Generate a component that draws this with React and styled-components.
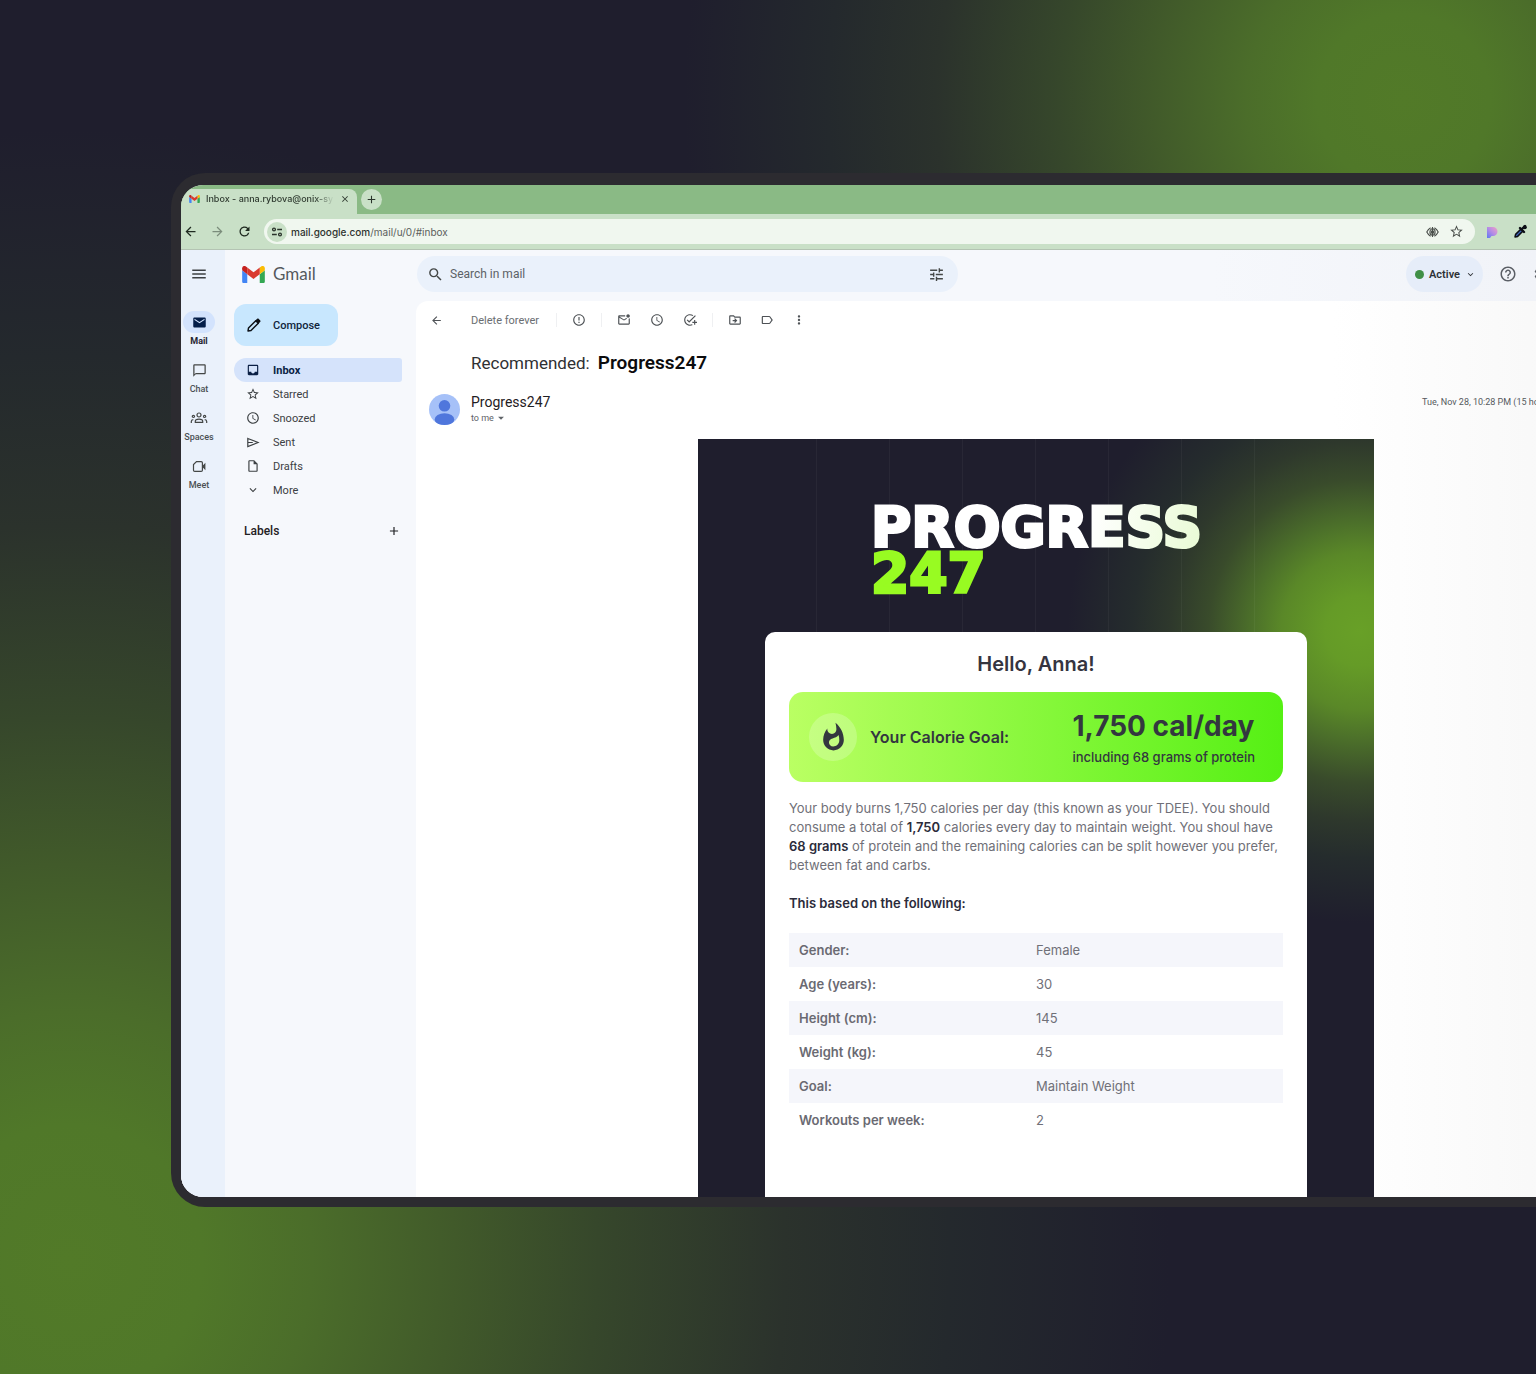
import React from "react";
import styled, { createGlobalStyle, css } from "styled-components";
import {
  MdMenu, MdSearch, MdTune, MdChatBubbleOutline, MdInbox, MdStarBorder, MdAccessTime,
  MdOutlineInsertDriveFile, MdExpandMore, MdAdd, MdArrowBack, MdArrowForward, MdErrorOutline,
  MdOutlineMarkEmailUnread, MdOutlineAddTask, MdMoreVert, MdHelpOutline, MdMail, MdRefresh, MdClose,
  MdArrowDropDown, MdOutlineSettings, MdOutlineLabel, MdOutlineDriveFileMove,
} from "react-icons/md";

const ui = `Roboto, "Liberation Sans", sans-serif`;
const inter = `Inter, "Liberation Sans", sans-serif`;

const Global = createGlobalStyle`
  *, *::before, *::after { box-sizing: border-box; }
  body { margin: 0; background: #1f1e2d; font-family: ${ui}; color: #3c4043; }
  svg { display: block; flex: none; }
  button { font: inherit; color: inherit; border: 0; background: none; padding: 0; cursor: pointer; }
  a { color: inherit; text-decoration: none; }
  h1, h2, p { margin: 0; }
`;

const glow = `#527a28 0%, #507829 12%, #4b6d2a 22%, #415a2a 35%, #36472b 48%, #2b322c 65%, #24292d 80%, rgba(31, 30, 45, 0) 100%`;

const Stage = styled.div`
  min-height: 100vh;
  overflow: hidden;
  padding: 173px 0 167px 171px;
  background:
    radial-gradient(circle 720px at calc(100% - 132px) 100px, ${glow}),
    radial-gradient(1100px 1130px at 70px calc(100% - 114px), ${glow}),
    #1f1e2d;
`;

const Device = styled.div`
  margin-right: -120px;
  padding: 12px 0 10px 10px;
  border-radius: 34px 0 0 34px;
  background: #2c2b30;
`;

const Screen = styled.div`
  border-radius: 22px 0 0 22px;
  overflow: hidden;
  background: #f6f8fc;
`;

/* Browser chrome */
const TabStrip = styled.div`
  display: flex;
  align-items: flex-end;
  gap: 4px;
  height: 29px;
  background: #8aba85;
`;

const Tab = styled.div`
  display: flex;
  align-items: center;
  gap: 6px;
  width: 176px;
  height: 25px;
  padding: 0 7px 5px 8px;
  border-radius: 8px 8px 0 0;
  background: #c9e0c7;
  color: #2f3a30;
`;

const TabTitle = styled.span`
  flex: 1;
  min-width: 0;
  overflow: hidden;
  white-space: nowrap;
  font: 500 9px/12px ${inter};
  mask-image: linear-gradient(to right, #000 85%, transparent);
`;

const NewTab = styled.button`
  display: grid;
  place-items: center;
  width: 21px;
  height: 21px;
  margin-bottom: 4px;
  border-radius: 50%;
  background: #c9e0c7;
  color: #2a332b;
`;

const Toolbar = styled.div`
  display: flex;
  align-items: center;
  height: 36px;
  padding: 0 128px 0 2px;
  gap: 12px;
  background: #c9e0c7;
  border-bottom: 1px solid #b4c4b3;
  color: #1f2a20;
`;

const NavButton = styled.button`
  opacity: ${(p) => (p.$dim ? 0.45 : 1)};
`;

const NavGroup = styled.div`
  display: flex;
  gap: 12px;
`;

const Extensions = styled.div`
  display: flex;
  align-items: center;
  gap: 15px;
`;

const Address = styled.div`
  flex: 1;
  display: flex;
  align-items: center;
  gap: 10px;
  height: 25px;
  padding: 0 11px 0 3px;
  border-radius: 13px;
  background: #f0f7ef;
  color: #4a4f4b;
`;

const SiteInfo = styled.button`
  display: grid;
  place-items: center;
  width: 20px;
  height: 20px;
  border-radius: 50%;
  background: #c9e0c7;
  color: #2a332b;
`;

const Url = styled.span`
  flex: 1;
  margin-left: -6px;
  font: 400 10px/14px ${inter};
  color: #5b605c;
  b { font-weight: 500; color: #2d322e; }
`;

/* Mail application */
const Mail = styled.div`
  display: grid;
  grid-template-columns: 44px 191px minmax(0, 1fr);
  background: linear-gradient(to right, #f6f8fc 70%, #f1f3f8 92%);
`;

const Rail = styled.nav`
  display: flex;
  flex-direction: column;
  background: #eaf1fb;
`;

const RailMenu = styled.button`
  display: grid;
  place-items: center;
  width: 36px;
  height: 48px;
  margin-bottom: 13px;
`;

const RailItem = styled.a`
  display: flex;
  flex-direction: column;
  align-items: center;
  width: 36px;
  height: 48px;
  font-size: 9px;
  line-height: 12px;
  font-weight: ${(p) => (p.$active ? 700 : 500)};
  color: ${(p) => (p.$active ? "#1f2430" : "#4b5054")};
  white-space: nowrap;
`;

const RailIcon = styled.span`
  display: grid;
  place-items: center;
  width: 32px;
  height: 22px;
  margin-bottom: 2px;
  border-radius: 11px;
  background: ${(p) => (p.$active ? "#d3e3fd" : "transparent")};
  color: ${(p) => (p.$active ? "#041e49" : "#444746")};
`;

const Sidebar = styled.aside`
  padding: 0 14px 0 9px;
`;

const Brand = styled.a`
  display: flex;
  align-items: center;
  gap: 8px;
  height: 48px;
  padding-left: 8px;
  font: 400 17px/22px Lato, ${ui};
  color: #55595d;
`;

const Compose = styled.button`
  display: flex;
  align-items: center;
  gap: 11px;
  width: 104px;
  height: 42px;
  margin: 6px 0 12px;
  padding-left: 12px;
  border-radius: 12px;
  background: #c8e7fe;
  color: #10243b;
  font-size: 11px;
  font-weight: 500;
`;

const Folders = styled.ul`
  list-style: none;
  margin: 0;
  padding: 0;
`;

const Folder = styled.a`
  display: flex;
  align-items: center;
  gap: 13px;
  height: 24px;
  padding-left: 12px;
  border-radius: 12px 3px 3px 12px;
  font-size: 11px;
  ${(p) => p.$active && css`
    background: #d5e3fb;
    color: #0b1f45;
    font-weight: 700;
  `}
`;

const LabelsHead = styled.div`
  display: flex;
  align-items: center;
  justify-content: space-between;
  margin-top: 20px;
  padding: 0 1px 0 10px;
  height: 18px;
  color: #1f2023;
  h2 { font-size: 12px; line-height: 16px; font-weight: 500; }
`;

const Main = styled.main`
  min-width: 0;
`;

const Header = styled.header`
  display: flex;
  align-items: center;
  justify-content: space-between;
  height: 51px;
  padding: 0 105px 3px 1px;
`;

const SearchBox = styled.label`
  display: flex;
  align-items: center;
  gap: 6px;
  width: 541px;
  height: 36px;
  padding: 0 13px 0 10px;
  border-radius: 18px;
  background: #eaf1fb;
  color: #444746;
`;

const SearchInput = styled.input`
  flex: 1;
  min-width: 0;
  padding: 0;
  border: 0;
  outline: 0;
  background: none;
  font: 400 12px/16px ${ui};
  &::placeholder { color: #5c6166; opacity: 1; }
`;

const HeaderTools = styled.div`
  display: flex;
  align-items: center;
  gap: 16px;
  color: #5b5f66;
`;

const Status = styled.button`
  display: flex;
  align-items: center;
  gap: 5px;
  height: 36px;
  padding: 0 7px 0 9px;
  border-radius: 18px;
  background: #e6edf9;
  color: #2d3035;
  font-size: 11px;
  font-weight: 600;
`;

const Dot = styled.i`
  width: 9px;
  height: 9px;
  border-radius: 50%;
  background: #3f8f46;
`;

const Thread = styled.section`
  border-radius: 12px 0 0 0;
  background: linear-gradient(to right, #fff 74%, #f7f7f7 95%);
`;

const Actions = styled.div`
  display: flex;
  align-items: center;
  height: 38px;
  padding-left: 14px;
  color: #4e5256;
  font-size: 11px;
`;

const TextAction = styled.button`
  margin: 0 17px 0 28px;
  color: #6a6e72;
`;

const ActionGroup = styled.div`
  display: flex;
  gap: ${(p) => p.$gap || 19}px;
  padding: 0 15px;
  border-left: 1px solid #eff0f2;
`;

const Subject = styled.h1`
  padding: 12px 0 0 55px;
  font-size: 17px;
  line-height: 24px;
  font-weight: 400;
  color: #2f3033;
  b { margin-left: 4px; font-size: 19px; font-weight: 600; color: #0c0c0d; }
`;

const Sender = styled.div`
  display: flex;
  align-items: center;
  gap: 11px;
  height: 64px;
  padding: 5px 84px 0 13px;
`;

const SenderText = styled.div`
  flex: 1;
  font-size: 14px;
  line-height: 17px;
  color: #1f2023;
`;

const Recipient = styled.button`
  display: flex;
  align-items: center;
  font-size: 9px;
  line-height: 12px;
  color: #5f6368;
`;

const Time = styled.time`
  margin-bottom: 16px;
  font-size: 9px;
  line-height: 12px;
  color: #55595d;
  white-space: nowrap;
`;

/* Email */
const Email = styled.article`
  width: 676px;
  max-width: 100%;
  margin: 0 auto;
  font-family: ${inter};
  background: radial-gradient(circle 292px at calc(100% - 14px) 192px,
    #68a027 0%, #659b27 12%, #5a8828 27%, #4c702a 37%, #394b2b 52%, #2e382c 65%, #252c2d 78%, #1f1e2d 100%);
`;

const Hero = styled.div`
  padding: 0 81px;
  background: linear-gradient(to right, rgba(255, 255, 255, 0.04) 1px, transparent 1px) 37px 0 / 73px 100% content-box;
`;

const Logo = styled.div`
  padding: 65px 0 36px 92px;
  font: 700 55px/46px "DejaVu Sans", ${inter};
  -webkit-text-stroke-width: 3px;
  white-space: nowrap;
`;

const LogoWord = styled.div`
  width: max-content;
  color: transparent;
  background: linear-gradient(100deg, #fff 65%, #e9fbd5 100%);
  background-clip: text;
`;

const LogoNumber = styled.div`
  color: #98fb22;
`;

const Card = styled.div`
  margin: 0 67px;
  padding: 20px 24px 60px;
  border-radius: 10px 10px 0 0;
  background: #fff;
`;

const Greeting = styled.h2`
  font-size: 20px;
  line-height: 24px;
  font-weight: 600;
  text-align: center;
  color: #35353f;
`;

const Goal = styled.div`
  display: flex;
  align-items: center;
  margin: 16px 0;
  height: 90px;
  padding: 0 28px 0 20px;
  border-radius: 14px;
  background: linear-gradient(to right, #baff63, #55f014);
  color: #33373f;
`;

const GoalIcon = styled.span`
  display: grid;
  place-items: center;
  width: 48px;
  height: 48px;
  margin-right: 13px;
  border-radius: 50%;
  background: rgba(255, 255, 255, 0.22);
`;

const GoalLabel = styled.span`
  flex: 1;
  font-size: 16px;
  line-height: 22px;
  font-weight: 600;
`;

const GoalValue = styled.div`
  strong { display: block; font-size: 28px; line-height: 36px; font-weight: 700; }
  span { display: block; font-size: 13px; line-height: 20px; font-weight: 500; margin-top: 3px; }
`;

const Copy = styled.p`
  padding-top: 1px;
  font-size: 13px;
  line-height: 19px;
  color: #707078;
  b { font-weight: 600; color: #2b2b3a; }
`;

const Facts = styled.table`
  width: 100%;
  margin-top: 19px;
  border-collapse: collapse;
  caption {
    padding: 0 0 20px;
    text-align: left;
    font-size: 13px;
    line-height: 19px;
    font-weight: 600;
    color: #2b2b3a;
  }
  tr:nth-child(odd) { background: #f5f6fb; }
  th, td {
    height: 34px;
    padding: 0;
    text-align: left;
    font-size: 13px;
    line-height: 18px;
    color: #707078;
  }
  th { width: 50%; padding-left: 10px; font-weight: 600; color: #6a6a72; }
  td { font-weight: 400; }
`;

const GmailMark = ({ size }) => (
  <svg width={size} height={Math.round(size * 0.76)} viewBox="0 0 24 18" aria-hidden="true">
    <path fill="#4285f4" d="M1.600 18h3.800V8.700L0 4.600v11.700C0 17.300.7 18 1.600 18z" />
    <path fill="#34a853" d="M18.600 18h3.800c.9 0 1.600-.7 1.600-1.700V4.600l-5.400 4.100z" />
    <path fill="#fbbc04" d="M18.600 1.700v7L24 4.600V2.400c0-2-2.300-3.200-3.900-2z" />
    <path fill="#d93a2f" d="M5.400 8.700v-7L12 6.700l6.600-5v7L12 13.700z" />
    <path fill="#c5221f" d="M0 2.400v2.200l5.400 4.100v-7L3.900.4C2.300-.8 0 .4 0 2.400z" />
  </svg>
);

const SiteIcon = () => (
  <svg width="12" height="12" viewBox="0 0 12 12" fill="none" stroke="currentColor" strokeWidth="1.3" aria-hidden="true">
    <circle cx="3" cy="3.500" r="1.400" /><path d="M6.200 3.500H11M1 8.500h4.800" /><circle cx="9" cy="8.500" r="1.400" />
  </svg>
);

const EyeIcon = () => (
  <svg width="13" height="12" viewBox="0 0 13 12" fill="none" stroke="currentColor" strokeWidth="1.1" aria-hidden="true">
    <path d="M4.600 1.800C3 2.800 1.600 4.300.8 6c.8 1.700 2.200 3.200 3.800 4.200M8.400 1.800c1.600 1 3 2.500 3.800 4.200-.8 1.700-2.200 3.200-3.800 4.200" />
    <ellipse cx="6.500" cy="6" rx="2.600" ry="3.200" />
    <path d="M6.500 1v10" />
    <circle cx="6.500" cy="6" r="1.300" fill="currentColor" />
  </svg>
);

const ExtensionIcon = () => (
  <svg width="11" height="12" viewBox="0 0 11 12" aria-hidden="true">
    <defs>
      <linearGradient id="ext" x1="1" y1="0" x2="0" y2="1">
        <stop offset="0" stopColor="#f0a3c4" /><stop offset=".5" stopColor="#b58be6" /><stop offset="1" stopColor="#5d78f2" />
      </linearGradient>
    </defs>
    <path fill="url(#ext)" d="M0 1h6a4.500 4.500 0 0 1 0 9H4.500L3 12H0z" />
  </svg>
);

const DropperIcon = () => (
  <svg width="15" height="15" viewBox="0 0 15 15" aria-hidden="true">
    <path d="M8 5 2.600 10.400 2 13l2.600-.6L10 7z" fill="#3c63b8" stroke="#0b0d14" strokeWidth="1.500" strokeLinejoin="round" />
    <path d="m7 4 4 4M8.500 5.500l3.500-3.500" stroke="#0b0d14" strokeWidth="2.400" strokeLinecap="round" />
    <circle cx="11.800" cy="3.200" r="2" fill="#0b0d14" />
  </svg>
);

const SpacesIcon = () => (
  <svg width="18" height="14" viewBox="0 0 18 14" fill="none" stroke="currentColor" strokeWidth="1.200" aria-hidden="true">
    <circle cx="9" cy="4" r="2" />
    <path d="M5.300 11.400V10.300C5.300 8.900 7 8.200 9 8.200s3.700.7 3.700 2.100v1.100z" />
    <circle cx="3.400" cy="5.400" r="1.100" />
    <circle cx="14.600" cy="5.400" r="1.100" />
    <path d="M1.300 12v-1.600c0-1 .8-1.600 2-1.700M16.700 12v-1.600c0-1-.8-1.600-2-1.700" />
  </svg>
);

const PencilIcon = () => (
  <svg width="16" height="16" viewBox="0 0 16 16" aria-hidden="true">
    <path d="M2 14l.5-3L9.800 3.700l2.500 2.500L5 13.500z" fill="none" stroke="#0d1117" strokeWidth="1.500" strokeLinejoin="round" />
    <path d="m9.300 3.600 1.900-1.900c.4-.4 1-.4 1.400 0l1.700 1.700c.4.4.4 1 0 1.400l-1.900 1.900z" fill="#0d1117" />
  </svg>
);

const SendIcon = () => (
  <svg width="14" height="13" viewBox="0 0 14 13" fill="none" stroke="currentColor" strokeWidth="1.200" aria-hidden="true">
    <path d="M1.800 2.500 12 6.500l-10.200 4zM1.800 6.500h5" />
  </svg>
);

const MeetIcon = () => (
  <svg width="14" height="13" viewBox="0 0 14 13" fill="none" stroke="currentColor" strokeWidth="1.200" aria-hidden="true">
    <path d="M4.500 1.600h4.700c.7 0 1.200.5 1.200 1.200v7.400c0 .7-.5 1.200-1.200 1.200H2.700c-.7 0-1.200-.5-1.200-1.200V4.600z" />
    <path d="m10.800 6.500 2-2.200v4.400z" fill="currentColor" />
  </svg>
);

const FlameIcon = () => (
  <svg width="31" height="31" viewBox="0 0 24 24" fill="currentColor" aria-hidden="true">
    <path d="M13.500.67s.74 2.650.74 4.800c0 2.060-1.350 3.730-3.410 3.730-2.070 0-3.630-1.670-3.630-3.730l.03-.36C5.210 7.510 4 10.620 4 14c0 4.420 3.580 8 8 8s8-3.580 8-8C20 8.610 17.410 3.800 13.500.67zM11.710 19c-1.780 0-3.220-1.400-3.220-3.140 0-1.620 1.050-2.760 2.810-3.120 1.770-.36 3.600-1.210 4.620-2.580.39 1.290.59 2.650.59 4.040 0 2.650-2.150 4.800-4.800 4.800z" />
  </svg>
);

const Avatar = () => (
  <svg width="31" height="31" viewBox="0 0 31 31" role="img" aria-label="Sender photo">
    <clipPath id="face"><circle cx="15.500" cy="15.500" r="15.500" /></clipPath>
    <g clipPath="url(#face)">
      <path fill="#a6c1f8" d="M0 0h31v31H0z" />
      <circle cx="15.500" cy="11.800" r="5.800" fill="#4f76dc" />
      <ellipse cx="15.500" cy="25.500" rx="9.800" ry="6.300" fill="#4f76dc" />
    </g>
  </svg>
);

const railItems = [
  ["Mail", <MdMail size={15} />],
  ["Chat", <MdChatBubbleOutline size={15} />],
  ["Spaces", <SpacesIcon />],
  ["Meet", <MeetIcon />],
];

const folders = [
  ["Inbox", <MdInbox size={14} />],
  ["Starred", <MdStarBorder size={14} />],
  ["Snoozed", <MdAccessTime size={14} />],
  ["Sent", <SendIcon />],
  ["Drafts", <MdOutlineInsertDriveFile size={14} />],
  ["More", <MdExpandMore size={14} />],
];

const facts = [
  ["Gender:", "Female"],
  ["Age (years):", "30"],
  ["Height (cm):", "145"],
  ["Weight (kg):", "45"],
  ["Goal:", "Maintain Weight"],
  ["Workouts per week:", "2"],
];

export default function App() {
  return (
    <>
      <Global />
      <Stage>
        <Device>
          <Screen>
            <TabStrip>
              <Tab>
                <GmailMark size={11} />
                <TabTitle>Inbox - anna.rybova@onix-sy</TabTitle>
                <button aria-label="Close tab"><MdClose size={10} /></button>
              </Tab>
              <NewTab aria-label="New tab"><MdAdd size={13} /></NewTab>
            </TabStrip>
            <Toolbar>
              <NavGroup>
                <NavButton aria-label="Back"><MdArrowBack size={15} /></NavButton>
                <NavButton aria-label="Forward" $dim><MdArrowForward size={15} /></NavButton>
                <NavButton aria-label="Reload"><MdRefresh size={15} /></NavButton>
              </NavGroup>
              <Address>
                <SiteInfo aria-label="Site information"><SiteIcon /></SiteInfo>
                <Url><b>mail.google.com</b>/mail/u/0/#inbox</Url>
                <EyeIcon />
                <MdStarBorder size={15} />
              </Address>
              <Extensions>
                <ExtensionIcon />
                <DropperIcon />
              </Extensions>
            </Toolbar>

            <Mail>
              <Rail aria-label="Apps">
                <RailMenu aria-label="Main menu"><MdMenu size={18} /></RailMenu>
                {railItems.map(([name, icon], i) => (
                  <RailItem key={name} href="#" $active={i === 0}>
                    <RailIcon $active={i === 0}>{icon}</RailIcon>
                    {name}
                  </RailItem>
                ))}
              </Rail>

              <Sidebar>
                <Brand href="#"><GmailMark size={23} />Gmail</Brand>
                <Compose><PencilIcon />Compose</Compose>
                <Folders>
                  {folders.map(([name, icon], i) => (
                    <li key={name}><Folder href="#" $active={i === 0}>{icon}{name}</Folder></li>
                  ))}
                </Folders>
                <LabelsHead>
                  <h2>Labels</h2>
                  <button aria-label="Create label"><MdAdd size={14} /></button>
                </LabelsHead>
              </Sidebar>

              <Main>
                <Header>
                  <SearchBox>
                    <MdSearch size={17} />
                    <SearchInput placeholder="Search in mail" aria-label="Search in mail" />
                    <MdTune size={17} />
                  </SearchBox>
                  <HeaderTools>
                    <Status><Dot />Active<MdExpandMore size={11} /></Status>
                    <MdHelpOutline size={18} />
                    <MdOutlineSettings size={18} />
                  </HeaderTools>
                </Header>

                <Thread>
                  <Actions>
                    <button aria-label="Back to inbox"><MdArrowBack size={13} /></button>
                    <TextAction>Delete forever</TextAction>
                    <ActionGroup>
                      <button aria-label="Report"><MdErrorOutline size={14} /></button>
                    </ActionGroup>
                    <ActionGroup>
                      <button aria-label="Mark unread"><MdOutlineMarkEmailUnread size={14} /></button>
                      <button aria-label="Snooze"><MdAccessTime size={14} /></button>
                      <button aria-label="Add to tasks"><MdOutlineAddTask size={14} /></button>
                    </ActionGroup>
                    <ActionGroup $gap={18}>
                      <button aria-label="Move to"><MdOutlineDriveFileMove size={14} /></button>
                      <button aria-label="Labels"><MdOutlineLabel size={14} /></button>
                      <button aria-label="More"><MdMoreVert size={14} /></button>
                    </ActionGroup>
                  </Actions>
                  <Subject>Recommended: <b>Progress247</b></Subject>
                  <Sender>
                    <Avatar />
                    <SenderText>
                      Progress247
                      <Recipient>to me<MdArrowDropDown size={14} /></Recipient>
                    </SenderText>
                    <Time>Tue, Nov 28, 10:28 PM (15 hours ago)</Time>
                  </Sender>

                  <Email>
                    <Hero>
                      <Logo>
                        <LogoWord>PROGRESS</LogoWord>
                        <LogoNumber>247</LogoNumber>
                      </Logo>
                    </Hero>
                    <Card>
                      <Greeting>Hello, Anna!</Greeting>
                      <Goal>
                        <GoalIcon><FlameIcon /></GoalIcon>
                        <GoalLabel>Your Calorie Goal:</GoalLabel>
                        <GoalValue>
                          <strong>1,750 cal/day</strong>
                          <span>including 68 grams of protein</span>
                        </GoalValue>
                      </Goal>
                      <Copy>
                        Your body burns 1,750 calories per day (this known as your TDEE). You should consume a total
                        of <b>1,750</b> calories every day to maintain weight. You shoul have <b>68 grams</b> of
                        protein and the remaining calories can be split however you prefer, between fat and carbs.
                      </Copy>
                      <Facts>
                        <caption>This based on the following:</caption>
                        <tbody>
                          {facts.map(([name, value]) => (
                            <tr key={name}><th scope="row">{name}</th><td>{value}</td></tr>
                          ))}
                        </tbody>
                      </Facts>
                    </Card>
                  </Email>
                </Thread>
              </Main>
            </Mail>
          </Screen>
        </Device>
      </Stage>
    </>
  );
}
